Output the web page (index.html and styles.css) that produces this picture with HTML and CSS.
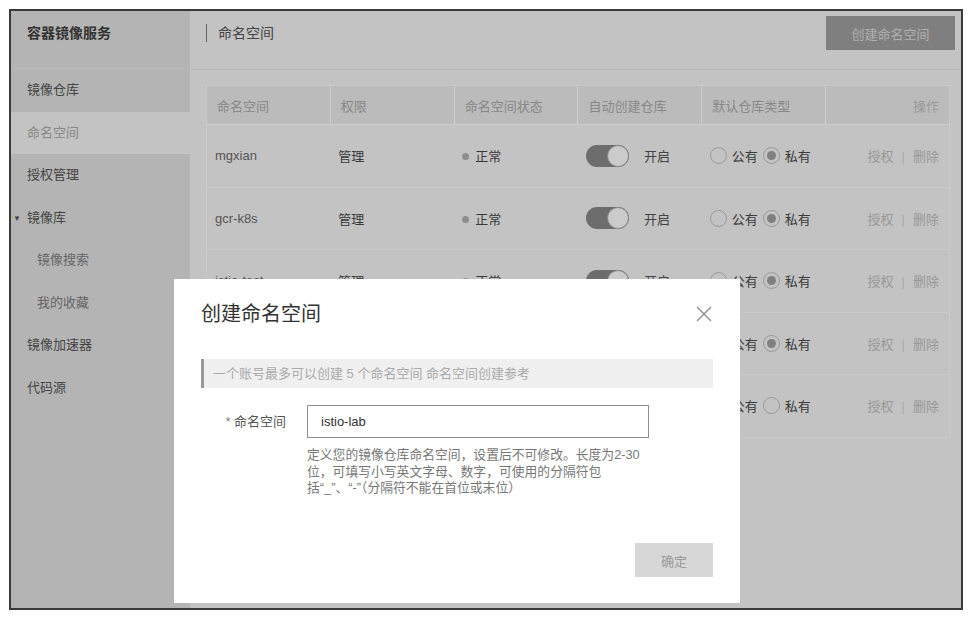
FILE: index.html
```html
<!doctype html>
<html lang="zh-CN">
  <head>
    <meta charset="UTF-8" />
    <meta name="viewport" content="width=device-width, initial-scale=1.0" />
    <title>命名空间 - 容器镜像服务</title>
    <link rel="stylesheet" href="styles.css">
  </head>
  <body>
    <div class="frame">
      <!-- 左侧菜单 -->
      <aside class="sidebar">
        <div class="sidebar-title">容器镜像服务</div>
        <ul class="menu">
          <li class="menu-item">镜像仓库</li>
          <li class="menu-item active">命名空间</li>
          <li class="menu-item">授权管理</li>
          <li class="menu-item group"><span class="caret">▼</span>镜像库</li>
          <li class="menu-item sub">镜像搜索</li>
          <li class="menu-item sub">我的收藏</li>
          <li class="menu-item">镜像加速器</li>
          <li class="menu-item">代码源</li>
        </ul>
      </aside>

      <main class="main">
        <div class="main-header">
          <h2 class="page-title">命名空间</h2>
          <button class="btn-create">创建命名空间</button>
        </div>

        <table class="ns-table">
          <thead>
            <tr>
              <th>命名空间</th>
              <th>权限</th>
              <th>命名空间状态</th>
              <th>自动创建仓库</th>
              <th>默认仓库类型</th>
              <th class="ops">操作</th>
            </tr>
          </thead>
          <tbody>
            <tr>
              <td>mgxian</td>
              <td class="strong">管理</td>
              <td class="strong"><span class="dot"></span>正常</td>
              <td><span class="switch"></span><span class="switch-text">开启</span></td>
              <td class="strong"><span class="radio"></span>公有<span class="radio checked"></span>私有</td>
              <td class="ops">授权<span class="sep">|</span>删除</td>
            </tr>
            <tr>
              <td>gcr-k8s</td>
              <td class="strong">管理</td>
              <td class="strong"><span class="dot"></span>正常</td>
              <td><span class="switch"></span><span class="switch-text">开启</span></td>
              <td class="strong"><span class="radio"></span>公有<span class="radio checked"></span>私有</td>
              <td class="ops">授权<span class="sep">|</span>删除</td>
            </tr>
            <tr>
              <td>istio-test</td>
              <td class="strong">管理</td>
              <td class="strong"><span class="dot"></span>正常</td>
              <td><span class="switch"></span><span class="switch-text">开启</span></td>
              <td class="strong"><span class="radio"></span>公有<span class="radio checked"></span>私有</td>
              <td class="ops">授权<span class="sep">|</span>删除</td>
            </tr>
            <tr>
              <td>istio-dev</td>
              <td class="strong">管理</td>
              <td class="strong"><span class="dot"></span>正常</td>
              <td><span class="switch"></span><span class="switch-text">开启</span></td>
              <td class="strong"><span class="radio"></span>公有<span class="radio checked"></span>私有</td>
              <td class="ops">授权<span class="sep">|</span>删除</td>
            </tr>
            <tr>
              <td>library</td>
              <td class="strong">管理</td>
              <td class="strong"><span class="dot"></span>正常</td>
              <td><span class="switch"></span><span class="switch-text">开启</span></td>
              <td class="strong"><span class="radio checked"></span>公有<span class="radio"></span>私有</td>
              <td class="ops">授权<span class="sep">|</span>删除</td>
            </tr>
          </tbody>
        </table>
      </main>

      <!-- 创建命名空间 弹窗 -->
      <div class="dialog">
        <div class="dialog-head">
          <h3 class="dialog-title">创建命名空间</h3>
          <svg class="dialog-close" width="16" height="16" viewBox="0 0 16 16">
            <path d="M1 1 L15 15 M15 1 L1 15" stroke="#8a8a8a" stroke-width="1.3" fill="none" />
          </svg>
        </div>

        <div class="notice">一个账号最多可以创建 5 个命名空间 命名空间创建参考</div>

        <div class="form-row">
          <label class="form-label"><span class="req">*</span> 命名空间</label>
          <div class="form-field">
            <input class="form-input" type="text" value="istio-lab" />
            <p class="form-help">定义您的镜像仓库命名空间，设置后不可修改。长度为2-30<br>位，可填写小写英文字母、数字，可使用的分隔符包<br>括“_”、“-”（分隔符不能在首位或末位）</p>
          </div>
        </div>

        <div class="dialog-foot">
          <button class="btn-ok">确定</button>
        </div>
      </div>
    </div>
  </body>
</html>
```

FILE: styles.css
```css
body {
  margin: 0;
  padding: 9px;
  background: #fff;
  font-family: 'Liberation Sans', 'Noto Sans CJK SC', sans-serif;
  font-size: 13px;
  color: #444;
}

.frame {
  position: relative;
  display: flex;
  width: 954px;
  height: 601px;
  box-sizing: border-box;
  border: 2px solid #3a3a3a;
  background: #c3c3c3;
  overflow: hidden;
}

/* 左侧菜单 */
.sidebar {
  width: 179px;
  flex-shrink: 0;
  background: #b4b4b4;
}

.sidebar-title {
  height: 58px;
  box-sizing: border-box;
  padding: 5px 0 0 16px;
  line-height: 34px;
  font-size: 14px;
  font-weight: bold;
  color: #333;
  border-bottom: 1px solid #bcbcbc;
}

.menu {
  list-style: none;
  margin: 0;
  padding: 0;
}

.menu-item {
  height: 42.5px;
  line-height: 42.5px;
  padding-left: 16px;
  color: #444;
}

.menu-item.active {
  background: #c3c3c3;
  color: #888;
}

.menu-item.group {
  padding-left: 2px;
}

.caret {
  display: inline-block;
  width: 14px;
  font-size: 8px;
  vertical-align: 1px;
}

.menu-item.sub {
  padding-left: 26px;
  color: #666;
}

/* 主区域 */
.main {
  flex: 1;
  min-width: 0;
}

.main-header {
  display: flex;
  justify-content: space-between;
  align-items: flex-start;
  height: 59px;
  box-sizing: border-box;
  padding: 5px 6px 0 16px;
  border-bottom: 1px solid #b8b8b8;
}

.page-title {
  margin: 0;
  padding-left: 11px;
  border-left: 1px solid #666;
  height: 18px;
  margin-top: 8px;
  line-height: 18px;
  font-size: 14px;
  font-weight: normal;
  color: #444;
}

.btn-create {
  width: 129px;
  height: 34px;
  border: none;
  background: #7f7f7f;
  color: #b0b0b0;
  font-family: inherit;
  font-size: 13px;
}

.ns-table {
  margin: 15px 0 0 16px;
  width: 744px;
  border-collapse: collapse;
  table-layout: fixed;
  border: 1px solid #cacaca;
}

.ns-table th {
  height: 39px;
  padding: 0 10px;
  box-sizing: border-box;
  background: #bbbbbb;
  border-right: 1px solid #cdcdcd;
  border-bottom: 1px solid #cdcdcd;
  text-align: left;
  font-weight: normal;
  color: #888;
}

.ns-table th:last-child {
  border-right: none;
}

.ns-table td {
  height: 62.5px;
  padding: 0 9px 0 8px;
  box-sizing: border-box;
  border-bottom: 1px solid #c9c9c9;
  color: #555;
  white-space: nowrap;
  vertical-align: middle;
}

.ns-table .ops {
  text-align: right;
  padding-right: 10px;
  color: #999;
}

.ns-table td.strong {
  color: #3a3a3a;
}

.sep {
  margin: 0 8px;
  color: #aaa;
}

.dot {
  display: inline-block;
  width: 7px;
  height: 7px;
  border-radius: 50%;
  background: #8e8e8e;
  margin-right: 6px;
  vertical-align: 1px;
}

.switch {
  position: relative;
  display: inline-block;
  width: 43px;
  height: 22px;
  border-radius: 11px;
  background: #6d6d6d;
  vertical-align: middle;
}

.switch::after {
  content: '';
  position: absolute;
  right: 0;
  top: 0;
  width: 20px;
  height: 20px;
  border-radius: 50%;
  background: #cbcbcb;
  border: 1px solid #8a8a8a;
}

.switch-text {
  margin-left: 15px;
  vertical-align: middle;
  color: #444;
}

.radio {
  position: relative;
  display: inline-block;
  width: 15px;
  height: 15px;
  border: 1px solid #999;
  border-radius: 50%;
  margin: 0 5px 0 0;
  vertical-align: -3px;
}

td .radio:nth-of-type(2) {
  margin-left: 5px;
}

.radio.checked::after {
  content: '';
  position: absolute;
  left: 3px;
  top: 3px;
  width: 9px;
  height: 9px;
  border-radius: 50%;
  background: #808080;
}

/* 弹窗 */
.dialog {
  position: absolute;
  left: 163px;
  top: 268px;
  width: 566px;
  height: 324px;
  box-sizing: border-box;
  padding: 21px 27px 26px 27px;
  background: #fff;
  display: flex;
  flex-direction: column;
}

.dialog-head {
  display: flex;
  justify-content: space-between;
  align-items: center;
}

.dialog-title {
  margin: 0;
  font-size: 20px;
  font-weight: normal;
  line-height: 28px;
  color: #333;
}

.dialog-close {
  margin-right: 1px;
}

.notice {
  margin-top: 31px;
  height: 29px;
  line-height: 29px;
  padding-left: 9px;
  border-left: 3px solid #999;
  background: #f0f0f0;
  color: #aaa;
}

.form-row {
  display: flex;
  margin-top: 17px;
}

.form-label {
  width: 85px;
  height: 33px;
  line-height: 33px;
  text-align: right;
  color: #555;
  margin-right: 21px;
}

.req {
  font-size: 12px;
  color: #777;
}

.form-input {
  display: block;
  width: 342px;
  height: 33px;
  box-sizing: border-box;
  padding: 0 13px;
  border: 1px solid #8f8f8f;
  font-family: inherit;
  font-size: 13px;
  color: #333;
  outline: none;
}

.form-help {
  margin: 9px 0 0;
  font-size: 12.8px;
  line-height: 16.5px;
  color: #777;
}

.dialog-foot {
  margin-top: auto;
  display: flex;
  justify-content: flex-end;
}

.btn-ok {
  width: 78px;
  height: 34px;
  border: none;
  background: #d7d7d7;
  color: #999;
  font-family: inherit;
  font-size: 13px;
}
```
